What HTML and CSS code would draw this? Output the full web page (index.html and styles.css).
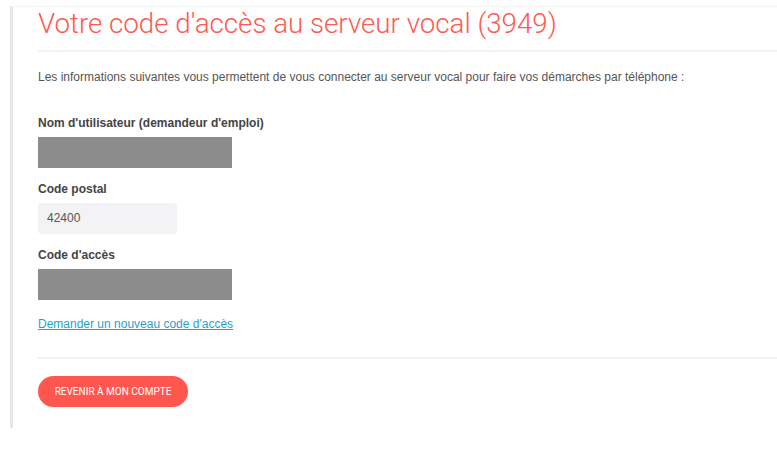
FILE: index.html
```html
<!DOCTYPE html>
<html lang="fr">
  <head>
    <meta charset="UTF-8" />
    <meta name="viewport" content="width=device-width, initial-scale=1.0" />
    <title>Code d'accès au serveur vocal</title>
    <link rel="stylesheet" href="styles.css">
  </head>
  <body>
    <div class="panel">
      <h1>Votre code d'accès au serveur vocal (3949)</h1>

      <p class="intro">
        Les informations suivantes vous permettent de vous connecter au serveur vocal pour faire vos démarches par téléphone :
      </p>

      <div class="field">
        <label>Nom d'utilisateur (demandeur d'emploi)</label>
        <div class="masked"></div>
      </div>

      <div class="field">
        <label>Code postal</label>
        <div class="value">42400</div>
      </div>

      <div class="field">
        <label>Code d'accès</label>
        <div class="masked"></div>
      </div>

      <a class="link" href="#">Demander un nouveau code d'accès</a>

      <div class="actions">
        <button class="btn">Revenir à mon compte</button>
      </div>
    </div>
  </body>
</html>
```

FILE: styles.css
```css
body {
  margin: 0;
  background-color: white;
  font-family: Arial, "Liberation Sans", sans-serif;
  color: #555;
}
.panel {
  margin: 6px 0 0 10px;
  height: 422px;
  box-sizing: border-box;
  border-left: 3px solid #e6e6e6;
  border-top: 1px solid #f2f2f2;
  padding-left: 25px;
}
h1 {
  margin: 0;
  padding-bottom: 10px;
  font-family: Roboto, sans-serif;
  font-weight: 300;
  font-size: 27.7px;
  line-height: 33px;
  color: #ff5a4f;
  border-bottom: 2px solid #f2f2f2;
}
.intro {
  margin: 17px 0 31px;
  font-size: 12px;
  line-height: 16px;
}
.field {
  margin-bottom: 14px;
}
label {
  display: block;
  margin-bottom: 7px;
  font-weight: bold;
  font-size: 12px;
  line-height: 14px;
  color: #444;
}
.masked {
  width: 194px;
  height: 31px;
  background-color: #8c8c8c;
}
.value {
  width: 130px;
  height: 31px;
  padding-left: 9px;
  border-radius: 4px;
  background-color: #f3f3f5;
  font-size: 12px;
  line-height: 31px;
  color: #555;
}
.link {
  display: inline-block;
  margin-top: 3px;
  font-size: 12px;
  color: #2a9fc9;
}
.actions {
  margin-top: 25px;
  padding-top: 17px;
  border-top: 2px solid #f2f2f2;
}
.btn {
  background-color: #ff574f;
  color: white;
  width: 150px;
  height: 31px;
  border: none;
  border-radius: 16px;
  font-family: Roboto, sans-serif;
  font-size: 10px;
  text-transform: uppercase;
  cursor: pointer;
}
```
